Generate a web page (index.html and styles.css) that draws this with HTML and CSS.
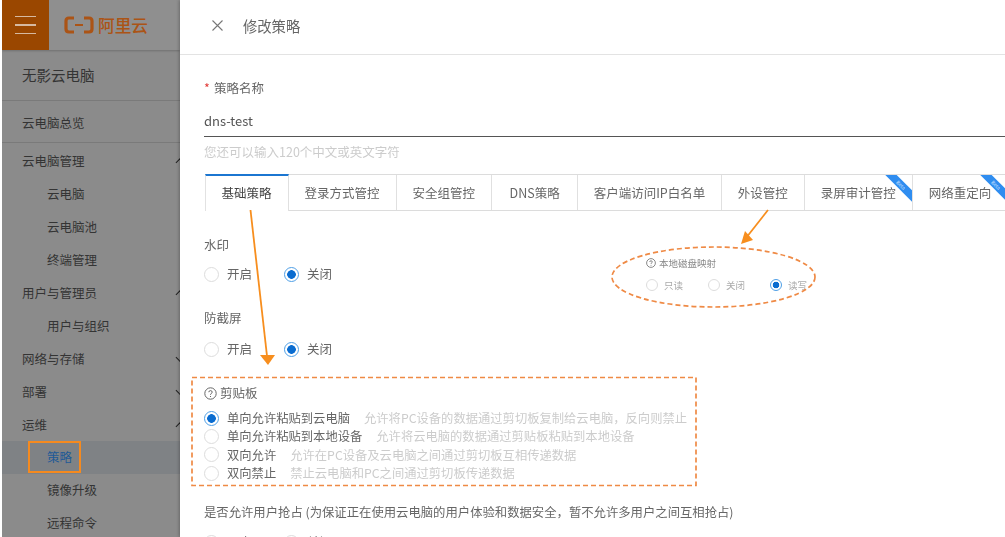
FILE: index.html
```html
<!DOCTYPE html>
<html lang="zh-CN">
<head>
<meta charset="utf-8">
<title>修改策略</title>
<link rel="stylesheet" href="styles.css">
</head>
<body>
<div class="page">
  <aside class="sidebar">
    <div class="topbar">
      <div class="burger"><i></i><i></i><i></i></div>
      <div class="logo">
        <svg class="logo-mark" width="30" height="18" viewBox="0 0 30 18" fill="none" stroke="currentColor" stroke-width="3.2">
          <path d="M10 2H5Q2 2 2 5V13Q2 16 5 16H10"/>
          <path d="M20 2H25Q28 2 28 5V13Q28 16 25 16H20"/>
          <path d="M11 9H19" stroke-width="2"/>
        </svg>
        <span>阿里云</span>
      </div>
    </div>
    <div class="side-title">无影云电脑</div>
    <div class="side-overview">云电脑总览</div>
    <nav class="side-nav">
      <div class="side-item">云电脑管理<b class="chev up"></b></div>
      <div class="side-item sub">云电脑</div>
      <div class="side-item sub">云电脑池</div>
      <div class="side-item sub">终端管理</div>
      <div class="side-item">用户与管理员<b class="chev up"></b></div>
      <div class="side-item sub">用户与组织</div>
      <div class="side-item">网络与存储<b class="chev down"></b></div>
      <div class="side-item">部署<b class="chev down"></b></div>
      <div class="side-item">运维<b class="chev up"></b></div>
      <div class="side-item sub active">策略</div>
      <div class="side-item sub">镜像升级</div>
      <div class="side-item sub">远程命令</div>
    </nav>
  </aside>

  <main class="panel">
    <header class="panel-head">
      <svg class="close" width="11" height="11" viewBox="0 0 11 11" stroke="#777" stroke-width="1.1" fill="none"><path d="M.5.5 10.5 10.5M10.5.5.5 10.5"/></svg>
      <h1>修改策略</h1>
    </header>
    <section class="form">
      <div class="label name-label"><em>*</em>策略名称</div>
      <div class="input">dns-test</div>
      <div class="hint">您还可以输入120个中文或英文字符</div>
      <div class="tabs">
        <div class="tab current">基础策略</div>
        <div class="tab">登录方式管控</div>
        <div class="tab">安全组管控</div>
        <div class="tab tab-dns">DNS策略</div>
        <div class="tab tab-ip">客户端访问IP白名单</div>
        <div class="tab">外设管控</div>
        <div class="tab">录屏审计管控<span class="ribbon">Beta</span></div>
        <div class="tab">网络重定向<span class="ribbon">Beta</span></div>
      </div>

      <div class="label g-first">水印</div>
      <div class="radios r-first">
        <label class="opt"><i class="radio"></i>开启</label>
        <label class="opt"><i class="radio on"></i>关闭</label>
      </div>
      <div class="label g-second">防截屏</div>
      <div class="radios r-second">
        <label class="opt"><i class="radio"></i>开启</label>
        <label class="opt"><i class="radio on"></i>关闭</label>
      </div>

      <div class="clip">
        <div class="label help-label">
          <svg class="help" width="13" height="13" viewBox="0 0 13 13" fill="none" stroke="#666"><circle cx="6.5" cy="6.5" r="5.7"/><path d="M4.8 5.2Q4.9 3.6 6.5 3.6T8.2 5.1Q8.2 6 7.2 6.5 6.5 6.9 6.5 7.8"/><path d="M6.5 9V10"/></svg>剪贴板
        </div>
        <div class="clip-list">
          <div class="clip-row"><i class="radio on"></i><span class="clip-name">单向允许粘贴到云电脑</span><span class="clip-desc">允许将PC设备的数据通过剪切板复制给云电脑，反向则禁止</span></div>
          <div class="clip-row"><i class="radio"></i><span class="clip-name">单向允许粘贴到本地设备</span><span class="clip-desc">允许将云电脑的数据通过剪贴板粘贴到本地设备</span></div>
          <div class="clip-row"><i class="radio"></i><span class="clip-name">双向允许</span><span class="clip-desc">允许在PC设备及云电脑之间通过剪切板互相传递数据</span></div>
          <div class="clip-row"><i class="radio"></i><span class="clip-name">双向禁止</span><span class="clip-desc">禁止云电脑和PC之间通过剪切板传递数据</span></div>
        </div>
      </div>

      <div class="label preempt">是否允许用户抢占 (为保证正在使用云电脑的用户体验和数据安全，暂不允许多用户之间互相抢占)</div>
      <div class="radios r-last">
        <label class="opt"><i class="radio"></i>开启</label>
        <label class="opt"><i class="radio"></i>关闭</label>
      </div>
    </section>
  </main>

  <div class="disk">
    <div class="disk-title">
      <svg class="help" width="10" height="10" viewBox="0 0 13 13" fill="none" stroke="#666"><circle cx="6.5" cy="6.5" r="5.7"/><path d="M4.8 5.2Q4.9 3.6 6.5 3.6T8.2 5.1Q8.2 6 7.2 6.5 6.5 6.9 6.5 7.8"/><path d="M6.5 9V10"/></svg>本地磁盘映射
    </div>
    <div class="disk-radios">
      <label class="disk-opt"><i class="radio mini"></i>只读</label>
      <label class="disk-opt"><i class="radio mini"></i>关闭</label>
      <label class="disk-opt"><i class="radio mini on"></i>读写</label>
    </div>
  </div>

  <div class="nav-mark"></div>

  <svg class="marks" width="1005" height="537" viewBox="0 0 1005 537" fill="none">
    <path d="M250.500 210 267 356" stroke="#f78e1e" stroke-width="1.800"/>
    <path d="M260 355H275L268 365Z" fill="#f78e1e"/>
    <path d="M768 210 746 238" stroke="#f78e1e" stroke-width="1.800"/>
    <path d="M741 244 745 231 753 240Z" fill="#f78e1e"/>
    <ellipse cx="713.500" cy="277" rx="101.500" ry="30" stroke="#ef8a45" stroke-width="1.700" stroke-dasharray="5 3"/>
    <rect x="192" y="377.500" width="504" height="108" stroke="#ef8a45" stroke-width="1.700" stroke-dasharray="5 3"/>
  </svg>
</div>
</body>
</html>
```

FILE: styles.css
```css
* { box-sizing: border-box; }
html, body { margin: 0; height: 100%; overflow: hidden; background: #fff; }
body { font-family: "Noto Sans CJK SC", "Noto Sans", sans-serif; font-size: 12.5px; color: #666; }

.page { position: relative; width: 1005px; height: 537px; display: flex; overflow: hidden; padding-left: 2px; filter: blur(.6px); }

/* sidebar */
.sidebar { width: 178px; flex: none; background: #8b8b8b; color: #343434; overflow: hidden; }
.topbar { height: 50px; display: flex; background: #8f8f8f; box-shadow: 0 1px 2px rgba(0,0,0,.2); position: relative; }
.burger { width: 47px; background: #9a4700; display: flex; flex-direction: column; justify-content: center; align-items: center; gap: 7px; }
.burger i { width: 21px; height: 1.5px; background: #d6b9a0; }
.logo { display: flex; align-items: center; gap: 4px; margin-left: 15px; color: #ab5416; font-size: 16.700px; font-weight: 500; }
.logo-mark { flex: none; }
.side-title { height: 51px; line-height: 49px; padding-left: 20px; font-size: 14.500px; border-bottom: 1px solid #7a7a7a; }
.side-overview { height: 42px; line-height: 44px; padding-left: 20px; border-bottom: 1px solid #7a7a7a; }
.side-nav { padding-top: 2px; }
.side-item { height: 32.900px; line-height: 32px; padding-left: 20px; display: flex; justify-content: space-between; align-items: center; }
.side-item.sub { padding-left: 45px; }
.side-item.active { background: #7f8285; color: #1f5a96; }
.chev { width: 7px; height: 7px; margin-right: -4px; border-left: 1.500px solid #222; border-top: 1.500px solid #222; }
.chev.up { transform: rotate(45deg); margin-top: 3px; }
.chev.down { transform: rotate(225deg); margin-top: -3px; }
.nav-mark { position: absolute; left: 28px; top: 441px; width: 53px; height: 32px; border: 2px solid #f58a1f; }

/* panel */
.panel { flex: 1; min-width: 0; background: #fff; box-shadow: -1px 0 3px rgba(0,0,0,.25); position: relative; overflow: hidden; }
.panel-head { height: 55px; display: flex; align-items: center; padding-left: 32px; gap: 20px; border-bottom: 1px solid #e3e3e3; }
.panel-head h1 { margin: 0; font-size: 14.300px; font-weight: 400; color: #666; position: relative; top: -2px; }
.close { position: relative; top: -2px; }
.form { padding: 24px 0 0 24px; }
.label { line-height: 18px; height: 18px; white-space: nowrap; }
.name-label { display: flex; }
.name-label em { color: #e23c39; font-style: normal; width: 10px; }
.input { height: 31px; margin-top: 9px; line-height: 29px; border-bottom: 1px solid #555; color: #555; font-size: 13px; }
.hint { line-height: 18px; margin-top: 6px; color: #ccc; }

.tabs { display: flex; margin: 13px 0 0 1px; width: 830px; height: 37px; border-top: 1px solid #dcdcdc; border-bottom: 1px solid #dcdcdc; }
.tab { position: relative; flex: none; padding: 0 16px; line-height: 35px; border-right: 1px solid #e0e0e0; white-space: nowrap; overflow: hidden; }
.tab-dns { padding: 0 17.500px; }
.tab-ip { padding: 0 15.500px; }
.tab.current { border-left: 1px solid #e2e2e2; background: #fff; margin-top: -1px; margin-bottom: -1px; height: 37px; border-top: 2px solid #1b76d1; line-height: 34px; padding: 0 16px 0 15.500px; color: #444; }
.ribbon { position: absolute; top: 6px; right: -9px; width: 40px; height: 8px; line-height: 8px; font-size: 5px; text-align: center; color: #cfe3ff; background: #2f8df0; transform: rotate(45deg); }

.g-first { margin-top: 25px; }
.r-first { margin-top: 11px; }
.g-second { margin-top: 26px; }
.r-second { margin-top: 13px; }
.radios { display: flex; height: 18px; }
.opt { width: 80px; display: flex; align-items: center; gap: 8px; line-height: 18px; }
.radio { display: block; flex: none; width: 15px; height: 15px; border-radius: 50%; border: 1px solid #dcdcdc; background: #fff; }
.radio.on { border: 1.500px solid #4f9fe6; background: radial-gradient(circle, #0a6cd0 0 4px, #fff 4.600px); }
.radio.mini { width: 12px; height: 12px; }
.radio.mini.on { border-width: 1px; background: radial-gradient(circle, #0a6cd0 0 3px, #fff 3.600px); }

.clip { width: 505px; height: 109px; margin: 19px 0 0 -12px; padding: 7px 0 0 12px; }
.help-label { display: flex; align-items: center; gap: 3px; }
.help { flex: none; }
.clip-list { margin-top: 7px; }
.clip-row { height: 18.330px; display: flex; align-items: center; line-height: 18px; white-space: nowrap; }
.clip-name { margin-left: 8px; font-size: 12.300px; }
.clip-desc { margin-left: 14px; color: #ccc; font-size: 12.300px; }
.preempt { margin-top: 17px; font-size: 12.350px; }
.r-last { margin-top: 12px; }

/* local disk annotation */
.disk { position: absolute; left: 646px; top: 256px; width: 180px; font-size: 9.500px; color: #888; }
.disk-title { display: flex; align-items: center; gap: 3px; height: 14px; }
.disk-radios { display: flex; margin-top: 8px; }
.disk-opt { flex: none; width: 62px; display: flex; align-items: center; gap: 6px; color: #aaa; }

.marks { position: absolute; left: 0; top: 0; pointer-events: none; }
```
